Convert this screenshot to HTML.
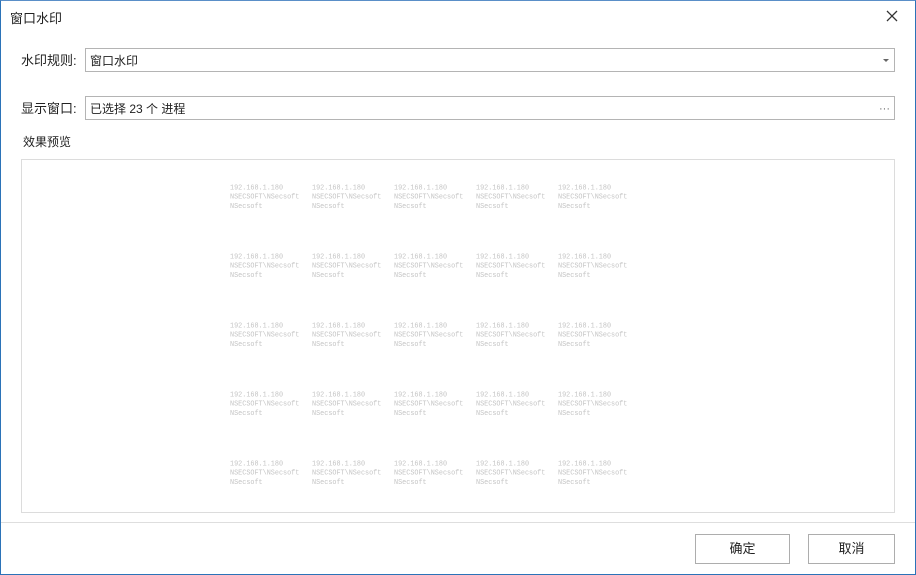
<!DOCTYPE html>
<html><head><meta charset="utf-8"><style>
*{margin:0;padding:0;box-sizing:border-box}
body{width:916px;height:575px;background:#fff;position:relative;overflow:hidden;font-family:"Liberation Sans","Noto Sans CJK SC",sans-serif;font-size:12px;color:#222}
.win{position:absolute;left:0;top:0;width:916px;height:575px;border:1px solid #2b73b8;border-top-color:#5a8fc8}
.t{position:absolute;white-space:nowrap}
.inp{position:absolute;left:85px;width:810px;height:24px;border:1px solid #b4b4b4;background:#fff}
.inp span{position:absolute;left:4px;top:3px}
.prev{position:absolute;left:21px;top:159px;width:874px;height:354px;border:1px solid #dcdcdc}
.wm{position:absolute;font-family:"Liberation Mono",monospace;font-size:6.8px;line-height:8.4px;color:#c4c4c4;white-space:pre;transform:scaleY(1.1);transform-origin:0 0}
.btn{position:absolute;top:534px;width:95px;height:30px;border:1px solid #adadad;background:#fff;text-align:center;line-height:28px;font-size:13px}
</style></head><body>
<div class="win"></div>
<div class="t" style="left:10px;top:8px;font-size:13px">窗口水印</div>
<svg style="position:absolute;left:886px;top:10px" width="12" height="12"><path d="M1 1L11 11M11 1L1 11" stroke="#333" stroke-width="1.3"/></svg>
<div class="t" style="left:21px;top:50px;font-size:13px">水印规则:</div>
<div class="inp" style="top:48px"><span>窗口水印</span><svg style="position:absolute;right:4px;top:10px" width="7" height="4"><path d="M0 0H6L3 3Z" fill="#666"/></svg></div>
<div class="t" style="left:21px;top:98px;font-size:13px">显示窗口:</div>
<div class="inp" style="top:96px"><span>已选择 23 个 进程</span><span style="left:auto;right:4px;top:6px;color:#666;font-size:11px">···</span></div>
<div class="t" style="left:23px;top:133px;font-size:12px">效果预览</div>
<div class="prev"></div>
<div id="wms"></div>
<div style="position:absolute;left:1px;top:522px;width:914px;height:1px;background:#dedede"></div>
<div class="btn" style="left:695px">确定</div>
<div class="btn" style="left:808px;width:87px">取消</div>
<script>
var h='';for(var r=0;r<5;r++)for(var c=0;c<5;c++){h+='<div class="wm" style="left:'+(230+c*82)+'px;top:'+(184+r*69)+'px">192.168.1.180\nNSECSOFT\\NSecsoft\nNSecsoft</div>';}
document.getElementById('wms').innerHTML=h;
</script>
</body></html>
